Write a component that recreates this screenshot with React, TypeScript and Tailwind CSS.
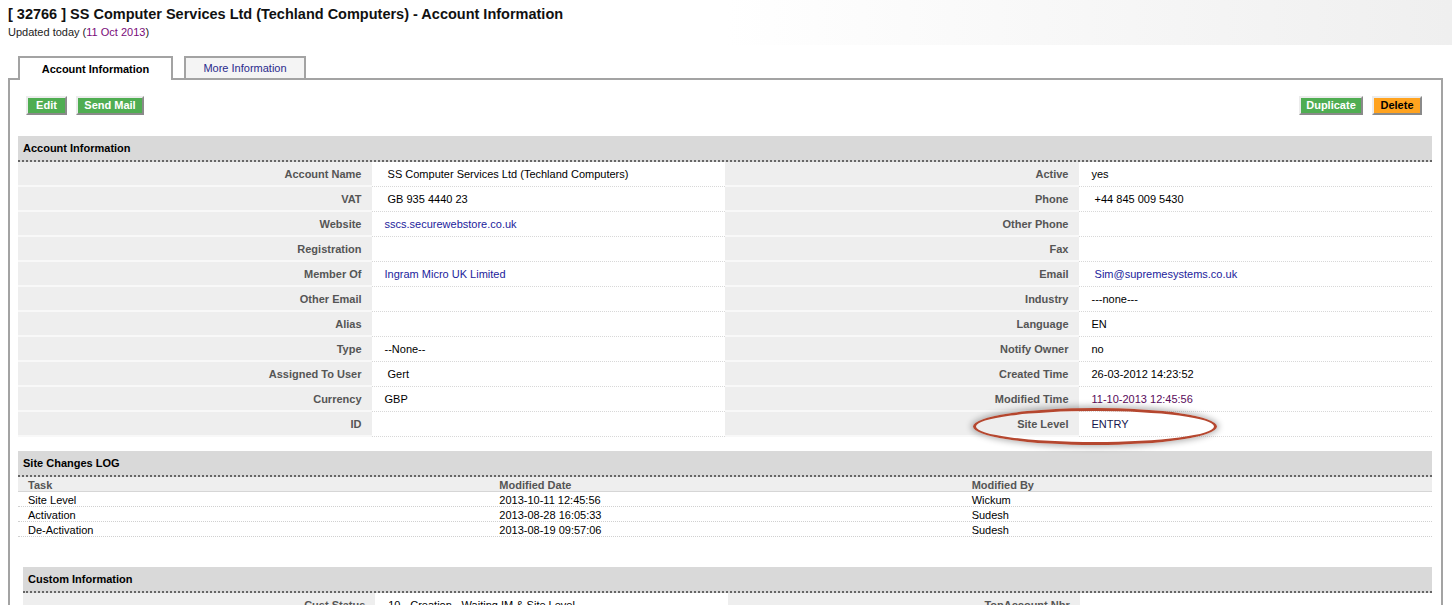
import React from "react";

type Val = { text: string; kind?: "link" | "purple" | "navy" };

const info: [string, Val, string, Val][] = [
  ["Account Name", { text: "\u00a0SS Computer Services Ltd (Techland Computers)" }, "Active", { text: "yes" }],
  ["VAT", { text: "\u00a0GB 935 4440 23" }, "Phone", { text: "\u00a0+44 845 009 5430" }],
  ["Website", { text: "sscs.securewebstore.co.uk", kind: "link" }, "Other Phone", { text: "" }],
  ["Registration", { text: "" }, "Fax", { text: "" }],
  ["Member Of", { text: "Ingram Micro UK Limited", kind: "link" }, "Email", { text: "\u00a0Sim@supremesystems.co.uk", kind: "link" }],
  ["Other Email", { text: "" }, "Industry", { text: "---none---" }],
  ["Alias", { text: "" }, "Language", { text: "EN" }],
  ["Type", { text: "--None--" }, "Notify Owner", { text: "no" }],
  ["Assigned To User", { text: "\u00a0Gert" }, "Created Time", { text: "26-03-2012 14:23:52" }],
  ["Currency", { text: "GBP" }, "Modified Time", { text: "11-10-2013 12:45:56", kind: "purple" }],
  ["ID", { text: "" }, "Site Level", { text: "ENTRY", kind: "navy" }],
];

const log = [
  ["Site Level", "2013-10-11 12:45:56", "Wickum"],
  ["Activation", "2013-08-28 16:05:33", "Sudesh"],
  ["De-Activation", "2013-08-19 09:57:06", "Sudesh"],
];

const valueColor = {
  link: "text-[#1c1c9c]",
  purple: "text-[#5a0a5a]",
  navy: "text-[#16164e]",
};

function Label({ children }: { children: React.ReactNode }) {
  return (
    <div className="h-[25px] flex items-center justify-end pr-[10px] pt-[1px] bg-[#eeeeee] border-b-2 border-[#f8f8f8] font-bold text-[#555]">
      {children}
    </div>
  );
}

function Value({ v }: { v: Val }) {
  return (
    <div
      className={`h-[25px] flex items-center pl-[13px] bg-white border-b border-dotted border-[#d8d8d8] ${
        v.kind ? valueColor[v.kind] : "text-black"
      }`}
    >
      {v.text}
    </div>
  );
}

function SectionHead({ title }: { title: string }) {
  return (
    <div className="h-[26px] flex items-center pl-[5px] bg-[#d9d9d9] border-b-2 border-dotted border-[#666] text-black font-bold">
      {title}
    </div>
  );
}

function Btn({ children, w, orange }: { children: React.ReactNode; w: string; orange?: boolean }) {
  return (
    <button
      className={`${w} h-[19px] flex items-center justify-center border-2 border-t-[#ececec] border-l-[#ececec] border-r-[#8a8a8a] border-b-[#8a8a8a] font-bold text-[11px] leading-none ${
        orange ? "bg-[#ffa31f] text-black" : "bg-[#4fad52] text-white"
      }`}
    >
      {children}
    </button>
  );
}

export default function App() {
  return (
    <div className="min-h-screen bg-white font-['Liberation_Sans',Arial,sans-serif] text-[11px] text-black">
      <div className="pl-[8px] pt-[6px] h-[45px] bg-gradient-to-l from-[#efefef] via-white to-white">
        <h1 className="text-[14.5px] leading-[16px] font-bold text-[#111]">
          [ 32766 ] SS Computer Services Ltd (Techland Computers) - Account Information
        </h1>
        <div className="mt-[4px] leading-[13px] text-[#222]">
          Updated today (<span className="text-[#7a0a7a]">11 Oct 2013</span>)
        </div>
      </div>

      <div className="ml-[8px] mr-[9px] mt-[11px]">
        <div className="flex items-end pl-[10px] gap-[11px]">
          <div className="relative z-10 -mb-[2px] w-[155px] h-[24px] flex items-center justify-center bg-white border-2 border-b-0 border-[#a3a3a3] font-bold">
            Account Information
          </div>
          <div className="w-[122px] h-[22px] flex items-center justify-center bg-[#f4f4f4] border-2 border-b-0 border-[#a3a3a3] text-[#2a2a8c]">
            More Information
          </div>
        </div>

        <div className="border-2 border-[#a3a3a3] pl-[8px] pr-[9px] pt-[16px] pb-[40px]">
          <div className="flex items-center justify-between pl-[8px] pr-[10px]">
            <div className="flex gap-[9px]">
              <Btn w="w-[41px]">Edit</Btn>
              <Btn w="w-[68px]">Send Mail</Btn>
            </div>
            <div className="flex gap-[9px]">
              <Btn w="w-[64px]">Duplicate</Btn>
              <Btn w="w-[50px]" orange>
                Delete
              </Btn>
            </div>
          </div>

          <div className="mt-[21px]">
            <SectionHead title="Account Information" />
            <div className="relative grid grid-cols-4">
              {info.map(([l, v, rl, rv]) => (
                <React.Fragment key={l}>
                  <Label>{l}</Label>
                  <Value v={v} />
                  <Label>{rl}</Label>
                  <Value v={rv} />
                </React.Fragment>
              ))}
              <div className="absolute left-[955px] top-[246px] w-[244px] h-[37px] rounded-[50%] border-[3px] border-[#b5472f] shadow-[0_0_6px_2px_rgba(0,0,0,0.3)] pointer-events-none" />
            </div>
          </div>

          <div className="mt-[14px]">
            <SectionHead title="Site Changes LOG" />
            <div className="grid grid-cols-3 h-[15px] items-center bg-[#eeeeee] border-b border-[#d6d6d6] font-bold text-[#555]">
              <div className="pl-[10px]">Task</div>
              <div className="pl-[10px]">Modified Date</div>
              <div className="pl-[11px]">Modified By</div>
            </div>
            {log.map((r) => (
              <div key={r[0] + r[1]} className="grid grid-cols-3 h-[15px] items-center border-b border-dotted border-[#d0d0d0]">
                <div className="pl-[10px]">{r[0]}</div>
                <div className="pl-[10px]">{r[1]}</div>
                <div className="pl-[11px]">{r[2]}</div>
              </div>
            ))}
          </div>

          <div className="mt-[30px] ml-[5px]">
            <SectionHead title="Custom Information" />
            <div className="grid grid-cols-4">
              <Label>Cust Status</Label>
              <Value v={{ text: "10 - Creation - Waiting IM & Site Level" }} />
              <Label>TopAccount Nbr</Label>
              <Value v={{ text: "" }} />
              <Label>Account Type</Label>
              <Value v={{ text: "Reseller" }} />
              <Label>Region</Label>
              <Value v={{ text: "UK" }} />
            </div>
          </div>
        </div>
      </div>
    </div>
  );
}
